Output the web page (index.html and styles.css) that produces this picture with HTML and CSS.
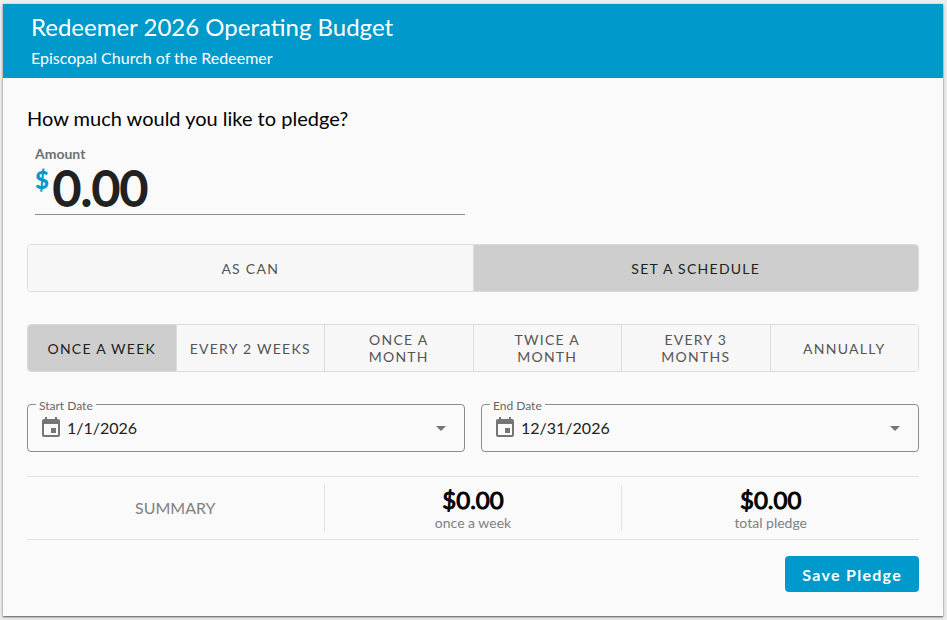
FILE: index.html
```
<!DOCTYPE html>
<html lang="en">
<head>
    <meta charset="utf-8">
    <title>Redeemer 2026 Operating Budget</title>
    <meta name="viewport" content="width=device-width, initial-scale=1">
    <link rel="stylesheet" href="styles.css">
</head>
<body>
    <form class="card">
        <header class="card-header">
            <h1>Redeemer 2026 Operating Budget</h1>
            <p>Episcopal Church of the Redeemer</p>
        </header>

        <div class="card-body">
            <h2>How much would you like to pledge?</h2>

            <div class="amount">
                <label for="amount">Amount</label>
                <div class="amount-row">
                    <span class="currency">$</span>
                    <input id="amount" type="text" inputmode="decimal" value="0.00">
                </div>
            </div>

            <div class="toggle-group">
                <button type="button">As Can</button>
                <button type="button" class="selected" aria-pressed="true">Set a Schedule</button>
            </div>

            <div class="toggle-group">
                <button type="button" class="selected" aria-pressed="true">Once a Week</button>
                <button type="button">Every 2 Weeks</button>
                <button type="button">Once a Month</button>
                <button type="button">Twice a Month</button>
                <button type="button">Every 3 Months</button>
                <button type="button">Annually</button>
            </div>

            <div class="dates">
                <div class="date-field">
                    <label for="start-date">Start Date</label>
                    <svg class="icon" viewBox="0 0 24 24"><path d="M17 12h-5v5h5v-5zM16 1v2H8V1H6v2H5c-1.11 0-1.99.9-1.99 2L3 19c0 1.1.89 2 2 2h14c1.1 0 2-.9 2-2V5c0-1.1-.9-2-2-2h-1V1h-2zm3 18H5V8h14v11z"/></svg>
                    <input id="start-date" type="text" value="1/1/2026">
                    <svg class="icon" viewBox="0 0 24 24"><path d="M7 10l5 5 5-5z"/></svg>
                </div>
                <div class="date-field">
                    <label for="end-date">End Date</label>
                    <svg class="icon" viewBox="0 0 24 24"><path d="M17 12h-5v5h5v-5zM16 1v2H8V1H6v2H5c-1.11 0-1.99.9-1.99 2L3 19c0 1.1.89 2 2 2h14c1.1 0 2-.9 2-2V5c0-1.1-.9-2-2-2h-1V1h-2zm3 18H5V8h14v11z"/></svg>
                    <input id="end-date" type="text" value="12/31/2026">
                    <svg class="icon" viewBox="0 0 24 24"><path d="M7 10l5 5 5-5z"/></svg>
                </div>
            </div>

            <div class="summary">
                <div class="summary-title">SUMMARY</div>
                <div class="summary-item">
                    <strong>$0.00</strong>
                    <span>once a week</span>
                </div>
                <div class="summary-item">
                    <strong>$0.00</strong>
                    <span>total pledge</span>
                </div>
            </div>

            <div class="actions">
                <button type="submit" class="save">Save Pledge</button>
            </div>
        </div>
    </form>
</body>
</html>
```
FILE: styles.css
```
* {
    box-sizing: border-box;
}
body {
    margin: 0;
    padding: 4px 4px 4px 3px;
    background-color: #eee;
    color: #000;
    font-family: Lato, sans-serif;
    font-size: 16px;
}
button, input {
    font-family: inherit;
}
h1, h2, p {
    margin: 0;
    font-weight: 400;
}
.card {
    background-color: #fafafa;
    box-shadow: 0 1px 3px rgba(0,0,0,0.4), 0 1px 1px rgba(0,0,0,0.3);
}
.card-header {
    padding: 8px 28px;
    background-color: #0099cc;
    color: #fff;
}
.card-header h1 {
    font-size: 24px;
    line-height: 30px;
}
.card-header p {
    padding-top: 4px;
    font-size: 16px;
    line-height: 24px;
}
.card-body {
    padding: 24px;
}
h2 {
    font-size: 20px;
    line-height: 32px;
}

/* amount */
.amount {
    width: 50%;
    padding: 12px 8px 0;
}
.amount label {
    display: block;
    color: #707070;
    font-size: 14px;
    font-weight: 700;
    line-height: 16px;
}
.amount-row {
    display: flex;
    align-items: flex-start;
    gap: 4px;
    height: 53px;
    border-bottom: 1px solid #8c8c8c;
}
.currency {
    color: #0099cc;
    font-size: 24px;
    font-weight: 900;
    line-height: 36px;
}
.amount input {
    flex: 1;
    min-width: 0;
    height: 50px;
    padding: 0;
    border: 0;
    outline: 0;
    background: none;
    color: #212121;
    font-size: 48px;
    -webkit-text-stroke: 2px #212121;
}

/* toggle buttons */
.toggle-group {
    display: flex;
    height: 48px;
    margin-top: 29px;
    border: 1px solid #dcdcdc;
    border-radius: 4px;
    overflow: hidden;
}
.toggle-group + .toggle-group {
    margin-top: 32px;
}
.toggle-group button {
    flex: 1 1 0;
    min-width: 0;
    padding: 0 12px;
    border: 0;
    border-left: 1px solid #dcdcdc;
    background-color: #f7f7f7;
    color: #555;
    font-size: 14px;
    line-height: 17px;
    letter-spacing: 0.09em;
    text-transform: uppercase;
    cursor: pointer;
}
.toggle-group button:first-child {
    border-left: 0;
}
.toggle-group .selected {
    background-color: #cecece;
    color: #212121;
}

/* dates */
.dates {
    display: flex;
    gap: 16px;
    margin-top: 32px;
}
.date-field {
    position: relative;
    display: flex;
    flex: 1;
    align-items: center;
    height: 48px;
    padding: 0 11px;
    border: 1px solid #8c8c8c;
    border-radius: 4px;
}
.date-field label {
    position: absolute;
    top: -7px;
    left: 8px;
    padding: 0 3px;
    background-color: #fafafa;
    color: #666;
    font-size: 12px;
    line-height: 16px;
}
.date-field input {
    flex: 1;
    min-width: 0;
    padding: 0 4px 2px;
    border: 0;
    outline: 0;
    background: none;
    color: #212121;
    font-size: 16px;
}
.icon {
    width: 24px;
    height: 24px;
    fill: #757575;
}

/* summary */
.summary {
    display: flex;
    align-items: center;
    height: 64px;
    margin-top: 24px;
    border-top: 1px solid #e3e3e3;
    border-bottom: 1px solid #e3e3e3;
    text-align: center;
    color: #808080;
}
.summary > div {
    flex: 1;
}
.summary-title {
    padding-bottom: 2px;
}
.summary-item {
    height: 46px;
    border-left: 1px solid #e3e3e3;
}
.summary-item strong {
    display: block;
    color: #000;
    font-size: 24px;
    font-weight: 400;
    line-height: 30px;
    -webkit-text-stroke: 1px #000;
}
.summary-item span {
    display: block;
    font-size: 14px;
    line-height: 16px;
}

.actions {
    display: flex;
    justify-content: flex-end;
    margin-top: 16px;
}
.save {
    height: 36px;
    padding: 0 17px;
    border: 0;
    border-radius: 4px;
    background-color: #0099cc;
    color: #fff;
    font-size: 16px;
    font-weight: 700;
    letter-spacing: 0.08em;
    cursor: pointer;
}
```
